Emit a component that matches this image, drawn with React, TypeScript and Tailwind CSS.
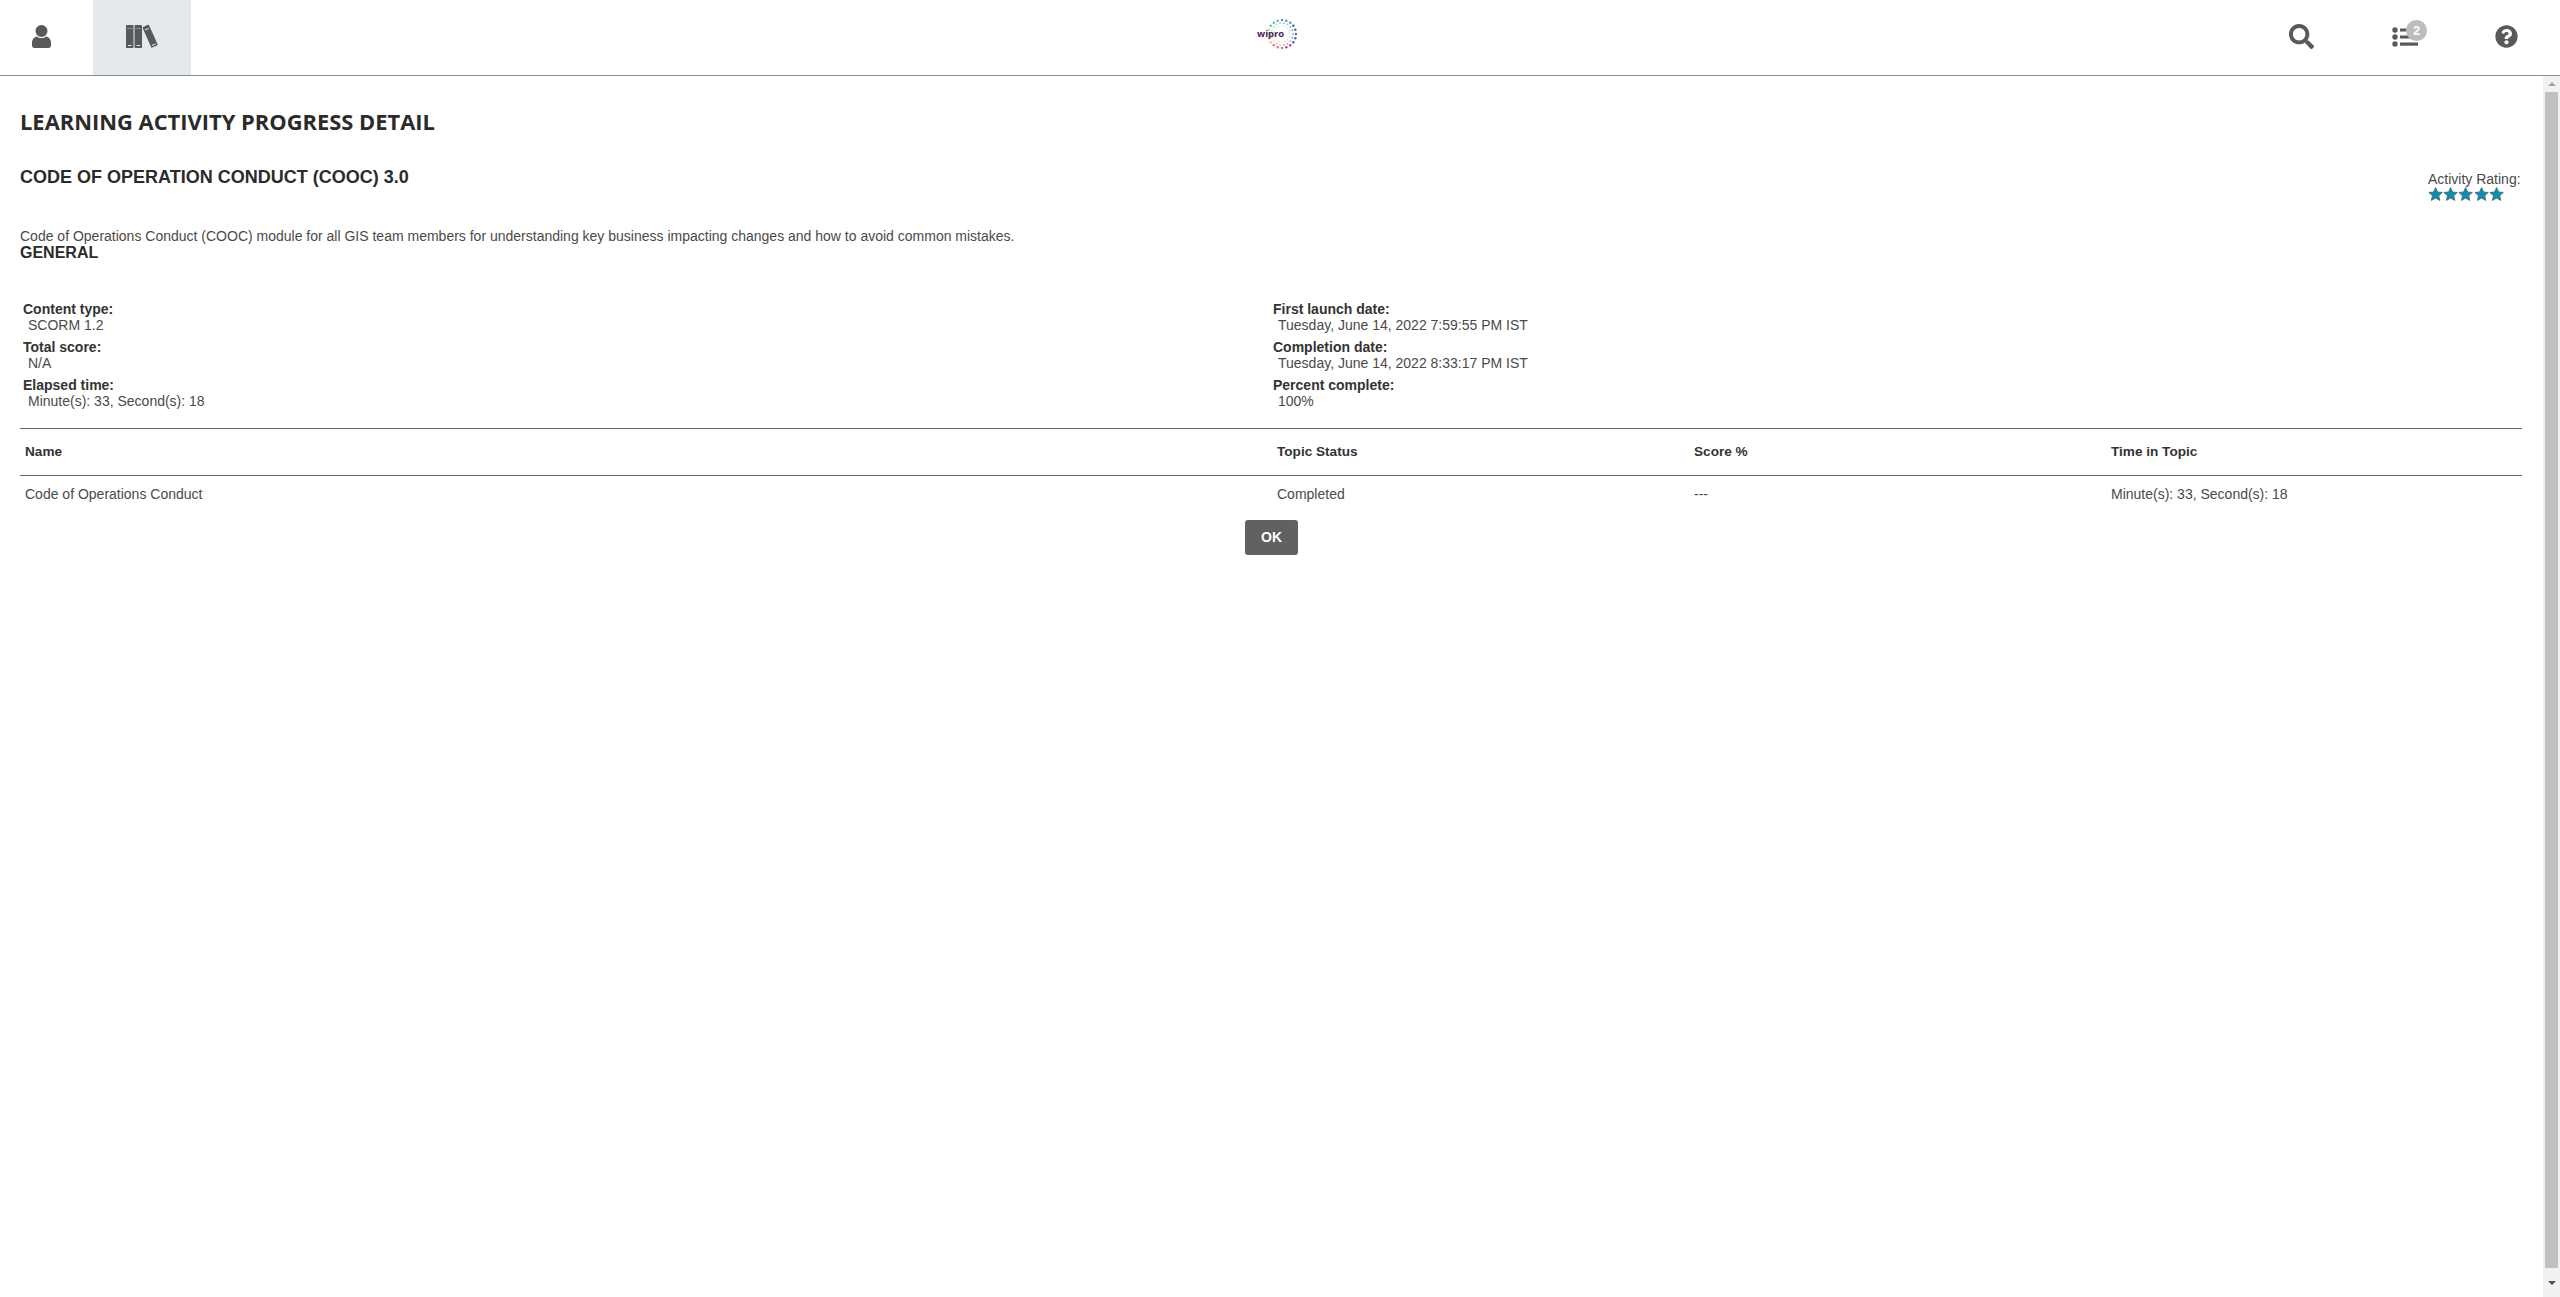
import React from "react";
import { FaSearch, FaQuestionCircle } from "react-icons/fa";

function UserIcon() {
  return (
    <svg width="19" height="23" viewBox="0 0 19 23" fill="#58595b">
      <circle cx="9.5" cy="6" r="6" />
      <path d="M5 11.5c1.2 1 2.8 1.6 4.5 1.6s3.3-.6 4.5-1.6c2.8.6 5 2.6 5 6.5v2.5c0 1.4-1 2.5-2.5 2.5h-14C1 23 0 21.9 0 20.5V18c0-3.900 2.200-5.900 5-6.500z" />
    </svg>
  );
}

function Books() {
  return (
    <svg width="32" height="24" viewBox="0 0 32 24" fill="#58595b">
      <rect x="0" y="1" width="7.5" height="23" rx="0.8" />
      <rect x="8.5" y="1" width="7.500" height="23" rx="0.8" />
      <g transform="rotate(-24 24 12)">
        <rect x="20.5" y="1" width="7" height="22.5" rx="0.8" />
        <rect x="22" y="4" width="4" height="1" fill="#e4e9ed" />
        <rect x="22" y="21" width="4" height="1" fill="#e4e9ed" />
      </g>
      <rect x="2" y="21" width="3.5" height="1" fill="#e4e9ed" />
      <rect x="10.5" y="21" width="3.5" height="1" fill="#e4e9ed" />
      <rect x="1" y="4" width="5.5" height="1" fill="#8a8b8d" />
      <rect x="9.5" y="4" width="5.5" height="1" fill="#8a8b8d" />
    </svg>
  );
}

function WiproLogo() {
  const rings = [
    { r: 14, n: 20, s: 1.25, o: 0.9 },
    { r: 11, n: 18, s: 0.9, o: 0.55 },
    { r: 8, n: 16, s: 0.6, o: 0.4 },
  ];
  const color = (a: number) => {
    const d = ((a % 360) + 360) % 360;
    if (d < 40 || d >= 320) return "#2f5aa0";
    if (d < 90) return "#c2307f";
    if (d < 130) return "#e8684a";
    if (d < 170) return "#f2b84b";
    if (d < 215) return "#b7d96f";
    if (d < 265) return "#3fbfa8";
    return "#3d8fc2";
  };
  return (
    <div className="relative w-[30px] h-[30px]">
      <svg width="30" height="30" viewBox="-15 -15 30 30" className="absolute left-0 top-0">
        {rings.map((ring) =>
          Array.from({ length: ring.n }).map((_, i) => {
            const a = (i * 360) / ring.n;
            const rad = (a * Math.PI) / 180;
            return (
              <circle
                key={ring.r + "-" + i}
                cx={ring.r * Math.cos(rad)}
                cy={ring.r * Math.sin(rad)}
                r={ring.s}
                fill={color(a)}
                opacity={ring.o}
              />
            );
          })
        )}
      </svg>
      <span className="absolute left-[-10px] top-[9px] text-[9.5px] leading-[12px] font-bold text-[#45235e] font-['Open_Sans',sans-serif]">
        wipro
      </span>
    </div>
  );
}

function Info({ label, value }: { label: string; value: string }) {
  return (
    <div className="h-[38px] text-[14px] leading-[16px]">
      <div className="font-bold text-[#333]">{label}</div>
      <div className="pl-[5px] text-[#4a4a4a]">{value}</div>
    </div>
  );
}

export default function App() {
  return (
    <div className="h-[1297px] overflow-hidden flex flex-col bg-white font-['Liberation_Sans',sans-serif] text-[#333]">
      <header className="h-[76px] shrink-0 flex items-stretch justify-between border-b border-[#8c8c8c] bg-white">
        <div className="flex w-[400px]">
          <div className="w-[93px] flex items-center justify-center pb-[3px] pr-[11px]">
            <UserIcon />
          </div>
          <div className="w-[98px] h-[75px] flex items-center justify-center pb-[3px] bg-[#e4e9ed]">
            <Books />
          </div>
        </div>
        <div className="flex items-center pb-[8px] pl-[4px]">
          <WiproLogo />
        </div>
        <div className="flex w-[400px] justify-end items-center pb-[2px] text-[#58595b]">
          <div className="mr-[78px] flex justify-center">
            <FaSearch size={25} />
          </div>
          <div className="relative w-[26px] mr-[77px] h-[20px]">
            <svg width="26" height="20" viewBox="0 0 26 20" fill="#58595b">
              <circle cx="3" cy="3" r="2.7" />
              <circle cx="3" cy="10" r="2.7" />
              <circle cx="3" cy="17" r="2.7" />
              <rect x="8" y="1.5" width="18" height="3" />
              <rect x="8" y="8.500" width="18" height="3" />
              <rect x="8" y="15.500" width="18" height="3.200" />
            </svg>
            <span className="absolute left-[14px] top-[-7px] w-[21px] h-[21px] rounded-full bg-[#bdbcbc] text-white text-[13px] font-bold leading-[21px] text-center">
              2
            </span>
          </div>
          <div className="mr-[42px] flex justify-center">
            <FaQuestionCircle size={23} />
          </div>
        </div>
      </header>

      <div className="flex-1 flex min-h-0">
        <main className="flex-1 min-w-0 pl-[20px] pr-[21px]">
          <h1 className="mt-[32px] text-[21.9px] leading-[28px] font-bold text-[#2b2b2b] font-['Open_Sans',sans-serif]">
            LEARNING ACTIVITY PROGRESS DETAIL
          </h1>
          <div className="mt-[31px] flex justify-between">
            <h2 className="text-[18px] leading-[20px] font-bold text-[#2b2b2b]">
              CODE OF OPERATION CONDUCT (COOC) 3.0
            </h2>
            <div className="w-[94px] pt-[4px] text-[14px] leading-[16px] text-[#4a4a4a]">
              <div className="whitespace-nowrap">Activity Rating:</div>
              <div className="flex">
                {[0, 1, 2, 3, 4].map((i) => (
                  <svg key={i} width="15.2" height="14" viewBox="0 0 24 23" className="shrink-0">
                    <path
                      d="M12 1l3.200 7.300 7.800.7-5.900 5.200 1.800 7.800L12 18l-6.900 4 1.800-7.800L1 9l7.800-.7z"
                      fill="#0b8fb3"
                      stroke="#4b6a75"
                      strokeWidth="1.500"
                    />
                  </svg>
                ))}
              </div>
            </div>
          </div>
          <p className="mt-[27px] text-[14px] leading-[16px] text-[#4a4a4a]">
            Code of Operations Conduct (COOC) module for all GIS team members for understanding key business impacting changes and how to avoid common mistakes.
          </p>
          <h3 className="text-[16px] leading-[18px] font-bold text-[#2b2b2b]">GENERAL</h3>

          <div className="mt-[39px] flex pl-[3px]">
            <div className="w-[1250px]">
              <Info label="Content type:" value="SCORM 1.2" />
              <Info label="Total score:" value="N/A" />
              <Info label="Elapsed time:" value="Minute(s): 33, Second(s): 18" />
            </div>
            <div>
              <Info label="First launch date:" value="Tuesday, June 14, 2022 7:59:55 PM IST" />
              <Info label="Completion date:" value="Tuesday, June 14, 2022 8:33:17 PM IST" />
              <Info label="Percent complete:" value="100%" />
            </div>
          </div>

          <div className="mt-[13px] border-t border-[#666] grid grid-cols-[1252px_417px_417px_416px] h-[48px] border-b items-center text-[13.6px] font-bold text-[#333]">
            <div className="pl-[5px]">Name</div>
            <div className="pl-[5px]">Topic Status</div>
            <div className="pl-[5px]">Score %</div>
            <div className="pl-[5px]">Time in Topic</div>
          </div>
          <div className="grid grid-cols-[1252px_417px_417px_416px] h-[37px] items-center text-[14px] text-[#4a4a4a]">
            <div className="pl-[5px]">Code of Operations Conduct</div>
            <div className="pl-[5px]">Completed</div>
            <div className="pl-[5px]">---</div>
            <div className="pl-[5px]">Minute(s): 33, Second(s): 18</div>
          </div>
          <div className="mt-[7px] pl-[1225px]">
            <button className="w-[53px] h-[35px] rounded-[3px] bg-[#616161] text-white text-[14px] font-bold">OK</button>
          </div>
        </main>

        <div className="w-[17px] shrink-0 bg-[#f1f1f1] flex flex-col items-center">
          <div className="h-[16px] flex items-center justify-center">
            <div className="w-0 h-0 border-l-[4px] border-r-[4px] border-b-[4px] border-l-transparent border-r-transparent border-b-[#a3a3a3]" />
          </div>
          <div className="w-[13px] h-[1176px] bg-[#c1c1c1]" />
          <div className="flex-1 flex items-center justify-center pt-[1px]">
            <div className="w-0 h-0 border-l-[4px] border-r-[4px] border-t-[4px] border-l-transparent border-r-transparent border-t-[#505050]" />
          </div>
        </div>
      </div>
    </div>
  );
}
